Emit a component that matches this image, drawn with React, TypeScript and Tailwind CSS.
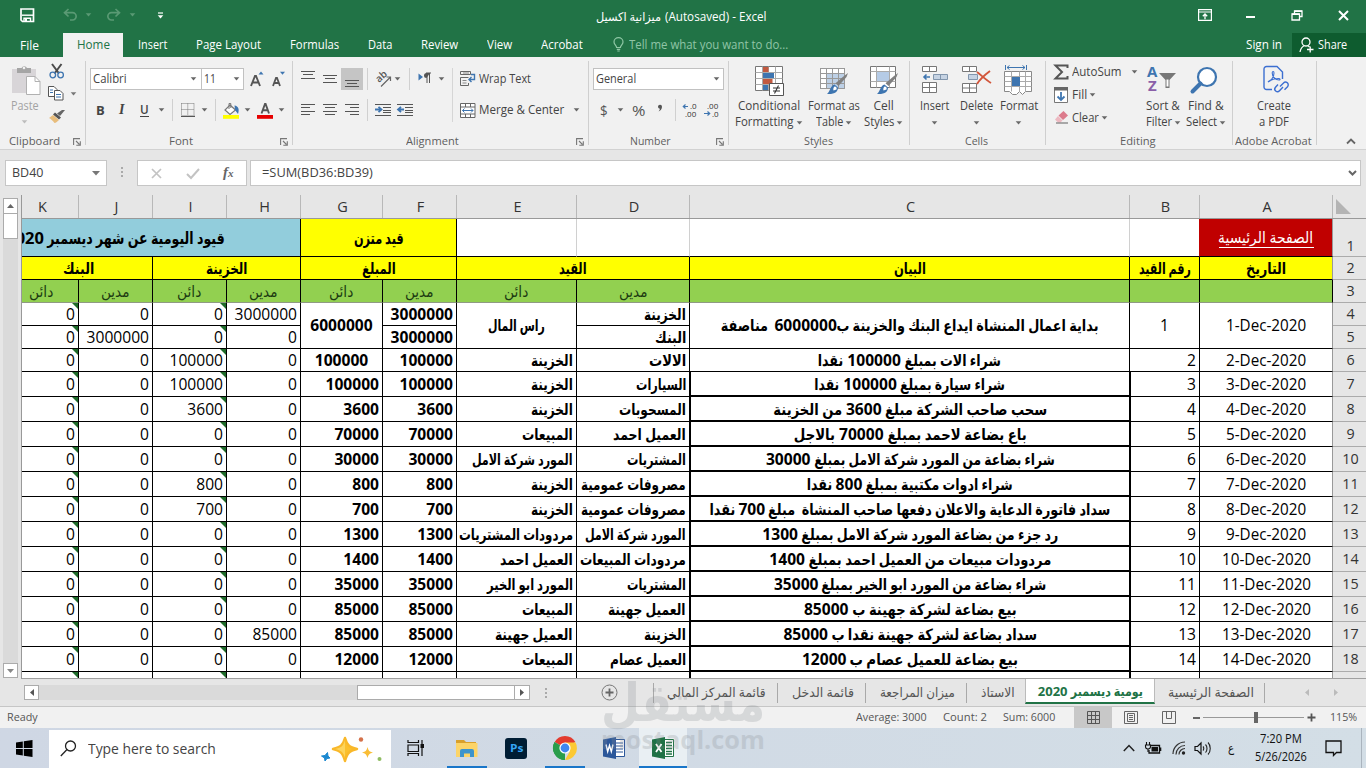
import React, { useLayoutEffect, useRef, useState } from "react";

const AR = /[\u0600-\u06ff]/;

/* Text run that is condensed or widened to the given advance width. */
function T({ w, className = "", children }: { w: number; className?: string; children: string }) {
  const ref = useRef<HTMLSpanElement>(null);
  const rtl = AR.test(children);
  const parts = rtl ? children.split(/(\d+)/).filter((p) => p !== "") : [children];
  const [m, setM] = useState<{ s: number; widths: number[] } | null>(null);
  useLayoutEffect(() => {
    const kids = Array.from(ref.current!.querySelectorAll<HTMLElement>("[data-run]"));
    const widths = kids.map((k) => k.offsetWidth);
    let fixed = 0;
    let flexible = 0;
    parts.forEach((p, i) => {
      if (rtl && /^\d+$/.test(p)) fixed += widths[i];
      else flexible += widths[i];
    });
    setM({ s: flexible ? (w - fixed) / flexible : 1, widths });
  }, [w, children]);
  return (
    <span ref={ref} dir={rtl ? "rtl" : "ltr"} className={"inline-flex shrink-0 whitespace-pre " + className}>
      {parts.map((p, i) => {
        const s = m && !(rtl && /^\d+$/.test(p)) ? m.s : 1;
        return (
          <span key={i} className="inline-block shrink-0" style={m ? { width: m.widths[i] * s } : undefined}>
            <span
              data-run=""
              className={rtl ? "inline-block origin-right" : "inline-block origin-left"}
              style={{ transform: s === 1 ? undefined : `scaleX(${s})` }}
            >
              {p}
            </span>
          </span>
        );
      })}
    </span>
  );
}

const Caret = ({ className = "" }: { className?: string }) => (
  <svg viewBox="0 0 7 4" className={"h-[4px] w-[7px] shrink-0 " + className}>
    <path d="M0.7 0.2h5.6L3.5 3.6z" fill="currentColor" />
  </svg>
);
const Sep = ({ className = "" }: { className?: string }) => <i className={"h-[22px] w-px shrink-0 bg-[#d0d0d0] " + className} />;

function Svg({ w, h, className = "", children }: { w: number; h: number; className?: string; children: React.ReactNode }) {
  return (
    <svg width={w} height={h} viewBox={`0 0 ${w} ${h}`} fill="none" className={"shrink-0 overflow-visible " + className}>
      {children}
    </svg>
  );
}

/* ------------------------------ title + tabs ------------------------------ */

function TitleBar() {
  return (
    <div className="flex h-[33px] items-center text-white">
      <Svg w={15} h={15} className="ml-[20px] -mt-[2px]">
        <path d="M1 1h12.5v12.5H2.5L1 12z" stroke="#fff" strokeWidth="1.7" />
        <path d="M2 7.2h11" stroke="#fff" strokeWidth="1.4" />
        <path d="M4 14v-3.8h6.5V14" stroke="#fff" strokeWidth="1.4" />
        <path d="M5 11h2v3H5z" fill="#fff" />
      </Svg>
      <Svg w={15} h={13} className="ml-[28px] -mt-[4px]">
        <path d="M5.5 1L1.5 4.7l4 3.8M2 4.7h7.5a3.6 3.6 0 010 7.3H7" stroke="#5a9a74" strokeWidth="1.7" />
      </Svg>
      <Caret className="-mt-[4px] ml-[7px] text-[#5a9a74]" />
      <Svg w={15} h={13} className="ml-[14px] -mt-[4px]">
        <path d="M9.5 1l4 3.7-4 3.8M13 4.7H5.5a3.6 3.6 0 000 7.3H8" stroke="#5a9a74" strokeWidth="1.7" />
      </Svg>
      <Caret className="-mt-[4px] ml-[8px] text-[#5a9a74]" />
      <Svg w={7} h={7} className="ml-[21px] -mt-[3px]">
        <path d="M1 1h5" stroke="#fff" strokeWidth="1.2" />
        <path d="M.7 3.3h5.6L3.5 6.6z" fill="#fff" />
      </Svg>
      <span className="ml-[432px] flex items-center text-[12px]">
        <T w={65}>ميزانية اكسيل</T>
        <T w={102} className="ml-[4px]">(Autosaved) - Excel</T>
      </span>
      <Svg w={14} h={12} className="-mt-[3px] ml-[431px]">
        <path d="M.6.6h12.8v10.8H.6zM.6 3h12.8" stroke="#fff" strokeWidth="1.2" />
        <path d="M7 10.2V5.5M4.8 7.3L7 5l2.2 2.3" stroke="#fff" strokeWidth="1.3" />
      </Svg>
      <i className="ml-[34px] mt-[1px] h-[2px] w-[9px] bg-white" />
      <Svg w={12} h={11} className="-mt-[2px] ml-[36px]">
        <path d="M1 4h7.5v6H1zM3.5 4V1H11v5.5H8.5" stroke="#fff" strokeWidth="1.3" />
        <path d="M1 4.3h7.5M3.5 1.3H11" stroke="#fff" strokeWidth="1.6" />
      </Svg>
      <Svg w={11} h={11} className="-mt-[2px] ml-[35px]">
        <path d="M1 1l9 9M10 1l-9 9" stroke="#fff" strokeWidth="2" />
      </Svg>
    </div>
  );
}

function TabStrip() {
  return (
    <div className="flex h-[24px] items-center text-[12px] text-white">
      <T w={19} className="ml-[20px] mt-px">File</T>
      <div className="ml-[24px] flex h-full w-[60px] items-center justify-center bg-[#f1f1f1] text-[#217346]">
        <T w={33}>Home</T>
      </div>
      <T w={29} className="ml-[15px]">Insert</T>
      <T w={65} className="ml-[29px]">Page Layout</T>
      <T w={49} className="ml-[29px]">Formulas</T>
      <T w={24} className="ml-[29px]">Data</T>
      <T w={37} className="ml-[29px]">Review</T>
      <T w={25} className="ml-[29px]">View</T>
      <T w={42} className="ml-[29px]">Acrobat</T>
      <Svg w={11} h={15} className="-mt-[2px] ml-[30px]">
        <path d="M3.6 10.5C3.6 8.5 1 7.5 1 4.9a4.5 4.3 0 019 0c0 2.6-2.6 3.6-2.6 5.6zM3.8 12.3h3.4M4.3 14h2.4" stroke="#8fc7a5" strokeWidth="1.2" />
      </Svg>
      <T w={159} className="ml-[5px] text-[#90c5a6]">Tell me what you want to do...</T>
      <T w={36} className="ml-[458px]">Sign in</T>
      <div className="ml-[10px] flex h-full flex-1 items-center bg-[#0e5c2f]">
        <Svg w={15} h={16} className="ml-[7px]">
          <circle cx="7" cy="5" r="4" stroke="#fff" strokeWidth="1.3" />
          <path d="M1 15c.5-3 2-5.3 4.500-6.500M8.500 8.500l2 1.500M8 12.500h6.500M11.200 9.500v6" stroke="#fff" strokeWidth="1.3" />
        </Svg>
        <T w={29} className="ml-[4px]">Share</T>
      </div>
    </div>
  );
}

/* --------------------------------- ribbon --------------------------------- */

function Group({ width, label, lw, launcher, children }: { width: string; label: string; lw: number; launcher?: boolean; children: React.ReactNode }) {
  return (
    <section className={"flex h-full shrink-0 " + width}>
      <div className="flex min-w-0 flex-1 flex-col">
        <div className="flex h-[76px] min-w-0">{children}</div>
        <div className="flex h-[16px] items-center justify-center text-[11.5px] text-[#5e5e5e]">
          <span className={launcher ? "flex flex-1 justify-center pr-[4px]" : "flex flex-1 justify-center pr-[2px]"}>
            <T w={lw}>{label}</T>
          </span>
          {launcher && (
            <Svg w={8} h={8} className="mr-[4px] mt-px">
              <path d="M.6 7V.6H7M3 3l3.500 3.500M7.300 3.300v4h-4" stroke="#777" strokeWidth="1.1" />
            </Svg>
          )}
        </div>
      </div>
      <i className="mt-[4px] h-[84px] w-px bg-[#cfcfcf]" />
    </section>
  );
}

function Big({ width, icon, a, aw, b, bw, caret = true }: { width: string; icon: React.ReactNode; a: string; aw: number; b?: string; bw?: number; caret?: boolean }) {
  return (
    <div className={"flex shrink-0 flex-col items-center pt-[7px] " + width}>
      <div className="flex h-[32px] items-center">{icon}</div>
      <span className="mt-[2px] flex h-[16px] items-center">
        <T w={aw}>{a}</T>
      </span>
      <span className="flex h-[16px] items-center">
        {b && <T w={bw!}>{b}</T>}
        {caret && <Caret className={b ? "ml-[2px] -mb-px text-[#6a6a6a]" : "-mb-px text-[#6a6a6a]"} />}
      </span>
    </div>
  );
}

function Lines({ ys, xs }: { ys: number[]; xs: [number, number][] }) {
  return (
    <Svg w={15} h={22}>
      {ys.map((y, i) => (
        <path key={y} d={`M${xs[i][0]} ${y + 0.5}h${xs[i][1]}`} stroke="#555" strokeWidth="1" />
      ))}
    </Svg>
  );
}

const Brush = () => (
  <>
    <path d="M29 8l-1.5 4-8 9-3-2.700L25 11z" fill="#808080" />
    <path d="M15.500 19.500l3.500 3c0 4-3 7-11 6.500 3-2 3.500-9 7.500-9.500z" fill="#3e75b0" />
    <path d="M15.500 21.500c2 0 2.500 1.500 2 3l-3 1c-.5-2 0-3 1-4z" fill="#fff" />
  </>
);

function Ribbon() {
  return (
    <div className="flex h-[93px] border-b border-[#d2d2d2] bg-[#f1f1f1] text-[12px] text-[#444]">
      <Group width="w-[86px]" label="Clipboard" lw={51} launcher>
        <div className="flex w-[49px] flex-col items-center pt-[8px]">
          <Svg w={30} h={31} className="ml-[3px]">
            <path d="M1 4h24v24H1z" fill="#d8d5d8" />
            <path d="M6 3h4.500a3 3 0 015.500 0H20v5H6z" fill="#a5a5a5" />
            <circle cx="13" cy="3" r="1.3" fill="#f1f1f1" />
            <path d="M15.500 11.500h8.500l5 5V29.500H15.500z" fill="#fff" stroke="#b1b1b1" />
            <path d="M24 11.500v5h5" stroke="#b1b1b1" />
          </Svg>
          <span className="mt-[2px] flex h-[16px] items-center text-[#a3a3a3]">
            <T w={28}>Paste</T>
          </span>
          <Caret className="mt-[6px] text-[#bdbdbd]" />
        </div>
        <div className="flex flex-col items-start pt-[6px]">
          <Svg w={16} h={16}>
            <path d="M3 1l7 9.500M12.500 1l-7 9.500" stroke="#4b4b4b" strokeWidth="2" />
            <circle cx="3.8" cy="12" r="2.8" stroke="#3e75b0" strokeWidth="1.300" />
            <circle cx="11.600" cy="12" r="2.8" stroke="#3e75b0" strokeWidth="1.300" />
          </Svg>
          <span className="mt-[7px] flex items-center">
            <Svg w={16} h={15} className="-ml-px">
              <path d="M.5.5h5.500l3 3v7h-8.500z" fill="#fff" stroke="#555" />
              <path d="M6.500 4.500H12l3 3v6.500H6.500z" fill="#fff" stroke="#555" />
              <path d="M2 4h3M2 6.500h3M8 8.500h5M8 11h5" stroke="#3e75b0" />
            </Svg>
            <Caret className="ml-[6px] text-[#777]" />
          </span>
          <Svg w={17} h={15} className="mt-[8px]">
            <path d="M16 1l-5 6-3-2.500L13 1z" fill="#666" />
            <path d="M6 3.500l6 5-2 2-6-5z" fill="#555" />
            <path d="M4 6l6 5c-1.500 1.500-3 3-4.500 3C3.500 11.500 2 10 0 9z" fill="#e8bd7c" />
          </Svg>
        </div>
      </Group>

      <Group width="w-[207px]" label="Font" lw={24} launcher>
        <div className="flex flex-col pl-[4px] pt-[11px]">
          <div className="flex h-[22px] items-center">
            <div className="flex h-[22px] w-[112px] items-center border border-[#c1c1c1] bg-white pl-[2px]">
              <T w={34}>Calibri</T>
              <Caret className="ml-[63px] text-[#666]" />
            </div>
            <div className="-ml-px flex h-[22px] w-[43px] items-center border border-[#c1c1c1] bg-white pl-[2px]">
              <T w={12}>11</T>
              <Caret className="ml-[17px] text-[#666]" />
            </div>
            <Svg w={14} h={16} className="ml-[6px]">
              <path d="M1 15L5 5h1l4 10M2.500 11.500h6" stroke="#555" strokeWidth="1.9" />
              <path d="M8.500 3.500L11 .5l2.500 3z" fill="#3e75b0" />
            </Svg>
            <Svg w={14} h={16} className="ml-[8px]">
              <path d="M1 15L4 7h1l3 8M2.500 12h4.500" stroke="#555" strokeWidth="1.8" />
              <path d="M8 .8h5l-2.500 3z" fill="#3e75b0" />
            </Svg>
          </div>
          <div className="mt-[9px] flex h-[22px] items-center text-[13px]">
            <T w={9} className="ml-[6px] font-bold">B</T>
            <span className="ml-[14px] w-[7px] font-['Liberation_Serif'] text-[14px] font-bold italic">I</span>
            <span className="ml-[14px] w-[9px] border-b border-[#444] pb-px font-semibold leading-[12px]">
              <T w={9}>U</T>
            </span>
            <Caret className="ml-[9px] text-[#666]" />
            <Sep className="ml-[7px]" />
            <Svg w={14} h={14} className="ml-[8px]">
              <path d="M.5.5v12M13 .5v12M6.750.5v12M.5.5H13M.5 6.500H13" stroke="#777" strokeDasharray="1 1" />
              <path d="M0 13.300h14" stroke="#444" strokeWidth="1.200" />
            </Svg>
            <Caret className="ml-[6px] text-[#666]" />
            <Sep className="ml-[7px]" />
            <Svg w={17} h={17} className="ml-[7px]">
              <path d="M7 3l5.500 5L7 12.500 2 8z" fill="#fff" stroke="#777" strokeWidth="1.200" />
              <path d="M6 7V1.500h1.800V6" stroke="#777" />
              <path d="M11.500 3.500c4 .5 5 4 3.500 8.500L12 8z" fill="#3e75b0" />
              <path d="M0 13h16v3.800H0z" fill="#ffff00" />
            </Svg>
            <Caret className="ml-[4px] text-[#666]" />
            <Svg w={16} h={17} className="ml-[6px]">
              <path d="M4.500 11.500L8 2h.6L12 11.500M6 8.300h4.800" stroke="#555" strokeWidth="1.900" />
              <path d="M0 13h16v3.800H0z" fill="#e60000" />
            </Svg>
            <Caret className="ml-[5px] text-[#666]" />
          </div>
        </div>
      </Group>

      <Group width="w-[296px]" label="Alignment" lw={53} launcher>
        <div className="flex w-[159px] shrink-0 flex-col pl-[8px] pt-[11px]">
          <div className="flex h-[22px] items-center">
            <Lines ys={[3, 6, 10]} xs={[[0, 14], [2, 10], [0, 14]]} />
            <span className="ml-[7px]">
              <Lines ys={[7, 10, 14]} xs={[[0, 14], [2, 10], [0, 14]]} />
            </span>
            <span className="ml-[3px] flex h-[22px] w-[22px] justify-center bg-[#c5c5c5]">
              <Lines ys={[12, 15, 18]} xs={[[0, 14], [2, 10], [0, 14]]} />
            </span>
            <Sep className="ml-[4px]" />
            <Svg w={17} h={17} className="ml-[7px]">
              <text x="0" y="0" transform="translate(4 12) rotate(-42)" fontSize="10" fontWeight="600" fill="#555" fontFamily="Open Sans">ab</text>
              <path d="M6 15.500L15.500 6M11.500 6h4v4" stroke="#666" strokeWidth="1.200" />
            </Svg>
            <Caret className="ml-[2px] text-[#666]" />
            <Sep className="ml-[8px]" />
            <Svg w={14} h={12} className="ml-[8px] -mt-[2px]">
              <path d="M.5 1.500L5 5 .5 8.500z" fill="#3e75b0" />
              <path d="M12 1H8.500a2.500 2.500 0 000 5z" fill="#555" />
              <path d="M9 1v10M11.500 1v10M8 1h5" stroke="#555" />
            </Svg>
            <Caret className="ml-[6px] text-[#666]" />
          </div>
          <div className="mt-[9px] flex h-[22px] items-center">
            <Lines ys={[5, 8, 12, 15]} xs={[[0, 14], [0, 9], [0, 14], [0, 9]]} />
            <span className="ml-[7px]">
              <Lines ys={[5, 8, 12, 15]} xs={[[0, 14], [2, 10], [0, 14], [2, 10]]} />
            </span>
            <span className="ml-[7px]">
              <Lines ys={[5, 8, 12, 15]} xs={[[0, 14], [5, 9], [0, 14], [5, 9]]} />
            </span>
            <Sep className="ml-[7px]" />
            <Svg w={16} h={14} className="ml-[7px]">
              <path d="M0 1.500h16M8 4.500h8M8 7.500h8M8 9.500h8M0 12.500h16" stroke="#555" />
              <path d="M0 6.500h5M3.500 3.800l3 2.700-3 2.700" stroke="#3e75b0" strokeWidth="1.800" />
            </Svg>
            <Svg w={16} h={14} className="ml-[6px]">
              <path d="M0 1.500h16M8 4.500h8M8 7.500h8M8 9.500h8M0 12.500h16" stroke="#555" />
              <path d="M2 6.500h5M4 3.800L1 6.500l3 2.700" stroke="#3e75b0" strokeWidth="1.800" />
            </Svg>
          </div>
        </div>
        <i className="mt-[11px] h-[54px] w-px bg-[#d6d6d6]" />
        <div className="flex flex-col pl-[7px] pt-[11px]">
          <div className="flex h-[22px] items-center">
            <Svg w={16} h={16}>
              <path d="M.5.5h10v3H.5zM.5 6.500h8M.5 14.500v-8M8.500 12v2.500H.5" stroke="#666" />
              <path d="M2.500 9.500h4M2.500 12h4M3 2h6" stroke="#888" />
              <path d="M11 3.500h3.500v5H9M11.500 6L9 8.500l2.500 2.500" stroke="#3e75b0" strokeWidth="1.400" />
            </Svg>
            <T w={52} className="ml-[3px]">Wrap Text</T>
          </div>
          <div className="mt-[9px] flex h-[22px] items-center">
            <Svg w={16} h={15}>
              <path d="M.5.5h14.500v14H.5zM.5 4h14.500M.5 11h14.500M5.500.5V4M10.500.5V4M5.500 11v3.500M10.500 11v3.500" stroke="#666" fill="#fff" />
              <path d="M2.500 7.500h10.500M4.500 5.500l-2 2 2 2M11 5.500l2 2-2 2" stroke="#3e75b0" />
            </Svg>
            <T w={85} className="ml-[3px]">Merge &amp; Center</T>
            <Caret className="ml-[9px] text-[#666]" />
          </div>
        </div>
      </Group>

      <Group width="w-[140px]" label="Number" lw={41} launcher>
        <div className="flex flex-col pl-[4px] pt-[11px]">
          <div className="flex h-[22px] w-[131px] items-center border border-[#c1c1c1] bg-white pl-[2px]">
            <T w={40}>General</T>
            <Caret className="ml-[77px] text-[#666]" />
          </div>
          <div className="mt-[9px] flex h-[22px] items-center text-[15px] text-[#555]">
            <T w={8} className="ml-[7px]">$</T>
            <Caret className="ml-[9px] text-[#666]" />
            <T w={13} className="ml-[8px]">%</T>
            <Svg w={6} h={9} className="-mt-[3px] ml-[12px]">
              <path d="M3.200.8a2 2 0 011.800 2C5 5 3.500 6.800 1.500 7.500c1-1 1.300-1.800 1.300-2.700A2 2 0 013.200.8z" fill="#555" />
            </Svg>
            <Sep className="ml-[12px]" />
            <Svg w={16} h={16} className="ml-[6px]">
              <text x="8" y="7" fontSize="8" fill="#333" fontFamily="Open Sans">.0</text>
              <text x="3" y="14.500" fontSize="8" fill="#333" fontFamily="Open Sans">.00</text>
              <path d="M6 4.500H1.500M3.500 2.500L1.300 4.500l2.200 2" stroke="#3e75b0" strokeWidth="1.200" />
            </Svg>
            <Svg w={16} h={16} className="ml-[6px]">
              <text x="3" y="7" fontSize="8" fill="#333" fontFamily="Open Sans">.00</text>
              <text x="8" y="14.500" fontSize="8" fill="#333" fontFamily="Open Sans">.0</text>
              <path d="M0 11.500h5M3.500 9.500l2.200 2-2.200 2" stroke="#3e75b0" strokeWidth="1.200" />
            </Svg>
          </div>
        </div>
      </Group>

      <Group width="w-[181px]" label="Styles" lw={29}>
        <Big
          width="w-[80px]"
          a="Conditional"
          aw={62}
          b="Formatting"
          bw={59}
          icon={
            <Svg w={31} h={31}>
              <path d="M1.500 1.500h27v24h-27z" fill="#fff" stroke="#777" />
              <path d="M9 2h5v5H9zM9 14h9v5H9z" fill="#c2593f" />
              <path d="M9 8h11v5H9zM9 20h5v5H9z" fill="#3e75b0" />
              <path d="M1.500 7.500h27M1.500 13.500h27M1.500 19.500h27M8.500 1.500v24M14.500 1.500v24M21.500 1.500v24" stroke="#aaa" />
              <path d="M9 2h5.500v5H9zM9 14h9.500v5H9z" fill="#c2593f" />
              <path d="M9 8h11v5H9zM9 20h5v5H9z" fill="#3e75b0" />
              <path d="M15.500 18.500h14v12h-14z" fill="#fff" stroke="#555" />
              <path d="M19 23h7M19 26h7M24.500 20.500l-4 8" stroke="#333" strokeWidth="1.100" />
            </Svg>
          }
        />
        <Big
          width="w-[49px]"
          a="Format as"
          aw={52}
          b="Table"
          bw={27}
          icon={
            <Svg w={30} h={31}>
              <path d="M1.500 3.500h24v20h-24z" fill="#fff" stroke="#777" />
              <path d="M7.500 8.500h18v15h-18z" fill="#bdd0e6" />
              <path d="M1.500 8.500h24M1.500 13.500h24M1.500 18.500h24M7.500 3.500v20M13.500 3.500v20M19.500 3.500v20M1.500 3.500h24v20h-24z" stroke="#999" />
              <Brush />
            </Svg>
          }
        />
        <Big
          width="w-[51px]"
          a="Cell"
          aw={20}
          b="Styles"
          bw={30}
          icon={
            <Svg w={30} h={31}>
              <path d="M1.500 1.500h25v21h-25z" fill="#fff" stroke="#777" />
              <path d="M7.500 6.500h13v10h-13z" fill="#b5cbe6" />
              <path d="M1.500 6.500h25M1.500 16.500h25M7.500 1.500v21M20.500 1.500v21" stroke="#aaa" />
              <Brush />
            </Svg>
          }
        />
      </Group>

      <Group width="w-[136px]" label="Cells" lw={23}>
        <Big
          width="w-[48px]"
          a="Insert"
          aw={29}
          icon={
            <Svg w={27} h={30} className="-mt-[1px]">
              <path d="M1.500 1.500h14v5h-14zM8.500 1.500v5M1.500 17.500h14v10h-14zM1.500 22.500h14M8.500 17.500v10" fill="#fff" stroke="#777" />
              <path d="M12.500 9.500h14v5h-14zM19.500 9.500v5" fill="#c6d3e3" stroke="#8296ad" />
              <path d="M9 12H3M5.500 9.500L3 12l2.500 2.500" stroke="#3e75b0" strokeWidth="1.600" />
            </Svg>
          }
        />
        <Big
          width="w-[36px]"
          a="Delete"
          aw={33}
          icon={
            <Svg w={31} h={30} className="-mt-[1px]">
              <path d="M1.500 1.500h14v5h-14zM8.500 1.500v5M1.500 18.500h14v9h-14zM1.500 23h14M8.500 18.500v9" fill="#fff" stroke="#777" />
              <path d="M7.500 9.500h9v5h-9z" fill="#c6d3e3" stroke="#8296ad" />
              <path d="M16 7c4 3 9 8 14 11M29 6c-4 3-10 8-13 13" stroke="#d2553a" strokeWidth="1.900" />
            </Svg>
          }
        />
        <Big
          width="w-[49px]"
          a="Format"
          aw={38}
          icon={
            <Svg w={29} h={32}>
              <path d="M1.500 1v5M22.500 1v5M3 3.500h18M5.500 1.500l-2.500 2 2.500 2M18.500 1.500l2.500 2-2.500 2" stroke="#3e75b0" />
              <path d="M.5 7.500h27v20h-6l-3 3-3-3-3 3-4 0-3-3H.5z" fill="#fff" stroke="#888" />
              <path d="M.5 12.500h27M.5 22.500h27M7.500 7.500v20M15.500 7.500v20M21.500 7.500v20M.5 17.500h27" stroke="#aaa" />
              <path d="M8 13h8v9H8z" fill="#3e75b0" />
            </Svg>
          }
        />
      </Group>

      <Group width="w-[187px]" label="Editing" lw={36}>
        <div className="flex w-[95px] shrink-0 flex-col pl-[8px] pt-[5px]">
          <div className="flex h-[20px] items-center">
            <Svg w={15} h={16}>
              <path d="M13.500 4V1.500H1.500L8 8l-6.500 6.500h12V12" stroke="#555" strokeWidth="2" />
            </Svg>
            <T w={50} className="ml-[3px]">AutoSum</T>
            <Caret className="ml-[9px] text-[#666]" />
          </div>
          <div className="mt-[3px] flex h-[20px] items-center">
            <Svg w={15} h={16} className="-mt-px">
              <path d="M.5.5h13v15H.5z" fill="#fff" stroke="#777" />
              <path d="M0 0h14v3.500H0z" fill="#666" />
              <path d="M7 5v8M3.500 9.500L7 13l3.500-3.500" stroke="#3e75b0" strokeWidth="1.800" />
            </Svg>
            <T w={15} className="ml-[3px]">Fill</T>
            <Caret className="ml-[2px] text-[#666]" />
          </div>
          <div className="mt-[3px] flex h-[20px] items-center">
            <Svg w={15} h={13} className="-mt-[2px]">
              <path d="M9.500 0l4.500 4.500L9 9 4.500 4.500z" fill="#dc7b8c" />
              <path d="M4 5l4.500 4.500-2 2H4L1 8.500z" fill="#edb9c1" />
              <path d="M2 12h12" stroke="#777" strokeWidth="1.200" />
            </Svg>
            <T w={27} className="ml-[3px]">Clear</T>
            <Caret className="ml-[2px] text-[#666]" />
          </div>
        </div>
        <Big
          width="w-[44px]"
          a="Sort &"
          aw={34}
          b="Filter"
          bw={26}
          icon={
            <Svg w={30} h={30} className="-ml-[2px]">
              <text x="0" y="12" fontSize="15" fontWeight="700" fill="#3e75b0" fontFamily="Open Sans">A</text>
              <text x="1" y="26" fontSize="15" fontWeight="700" fill="#8a5fa8" fontFamily="Open Sans">Z</text>
              <path d="M12 8h17l-6.500 7v8h-4v-8z" fill="#777" />
              <path d="M19.500 14.500h2v7h-2z" fill="#fff" />
            </Svg>
          }
        />
        <Big
          width="w-[42px]"
          a="Find &"
          aw={36}
          b="Select"
          bw={31}
          icon={
            <Svg w={28} h={29} className="-ml-[4px]">
              <circle cx="17" cy="11" r="9" fill="#fff" stroke="#3e75b0" strokeWidth="2.200" />
              <path d="M10.500 17.500L2.500 25.500" stroke="#3e75b0" strokeWidth="4" strokeLinecap="round" />
            </Svg>
          }
        />
      </Group>

      <Group width="w-[84px]" label="Adobe Acrobat" lw={77}>
        <Big
          width="w-[82px]"
          a="Create"
          aw={34}
          b="a PDF"
          bw={30}
          caret={false}
          icon={
            <Svg w={26} h={30} className="ml-[4px]">
              <path d="M9 24.500H3.500a2.500 2.500 0 01-2.500-2.500V4a2.500 2.500 0 012.500-2.500H14l5.500 5.500V14" stroke="#3c6fd1" strokeWidth="1.400" />
              <path d="M5 17c3-1 6-5 6-9 0-2-1.800-2-1.800 0 0 4 3.500 7 6.800 7 1.500 0 1.500-1.500-.5-1.500-3.500 0-7 1-10 3z" stroke="#3c6fd1" strokeWidth="1.100" />
              <path d="M17 21.500l3.500-3.500a2.600 2.600 0 014 3.700l-3 3M20 22l-3.500 3.800a2.600 2.600 0 01-4-3.600l2.500-2.700" stroke="#3c6fd1" strokeWidth="1.400" />
            </Svg>
          }
        />
      </Group>

      <Svg w={10} h={7} className="ml-[29px] mt-[81px]">
        <path d="M1 5.500l4-4 4 4" stroke="#666" strokeWidth="1.800" />
      </Svg>
    </div>
  );
}

/* ------------------------------- formula bar ------------------------------ */

function FormulaBar() {
  return (
    <div className="flex h-[45px] items-start bg-[#e6e6e6] pl-[5px] pt-[10px] text-[12.5px] text-[#444]">
      <div className="flex h-[26px] w-[102px] items-center border border-[#c6c6c6] bg-white pl-[6px]">
        <T w={31}>BD40</T>
        <svg viewBox="0 0 8 5" className="ml-[49px] h-[5px] w-[8px]">
          <path d="M0 0h8L4 4.500z" fill="#777" />
        </svg>
      </div>
      <Svg w={3} h={12} className="ml-[14px] mt-[7px]">
        <path d="M0 1h2M0 5h2M0 9h2" stroke="#aaa" strokeWidth="2" />
      </Svg>
      <div className="ml-[13px] flex h-[26px] w-[110px] items-center border border-[#c6c6c6] bg-white">
        <Svg w={11} h={11} className="ml-[13px]">
          <path d="M1 1l9 9M10 1l-9 9" stroke="#c3c3c3" strokeWidth="1.700" />
        </Svg>
        <Svg w={14} h={11} className="ml-[24px]">
          <path d="M1 6l4 4 8-9" stroke="#c3c3c3" strokeWidth="2" />
        </Svg>
        <span className="ml-[23px] -mt-[2px] font-['Liberation_Serif'] text-[15px] font-bold italic text-[#666]">
          f<span className="text-[11px]">x</span>
        </span>
      </div>
      <div className="ml-[3px] flex h-[26px] w-[1111px] items-center border border-[#c6c6c6] bg-white pl-[11px]">
        <T w={111}>=SUM(BD36:BD39)</T>
        <Svg w={9} h={6} className="ml-[975px] -mt-[1px]">
          <path d="M1 1l3.500 3.500L8 1" stroke="#666" strokeWidth="2" />
        </Svg>
      </div>
    </div>
  );
}

/* ---------------------------------- grid ---------------------------------- */

const COLS = "grid grid-cols-[74px_74px_74px_74px_82px_74px_120px_113px_440px_70px_133px_33px]";

const DATES = ["2-Dec-2020", "3-Dec-2020", "4-Dec-2020", "5-Dec-2020", "6-Dec-2020", "7-Dec-2020", "8-Dec-2020", "9-Dec-2020", "10-Dec-2020", "11-Dec-2020", "12-Dec-2020", "13-Dec-2020", "14-Dec-2020"];

type Line = { c: string; cw: number; d: string; dw: number; e: string; ew: number; n: string; i?: string; h?: string };
const LINES: Line[] = [
  { c: "شراء الات بمبلغ 100000 نقدا", cw: 182, d: "الالات", dw: 37, e: "الخزينة", ew: 42, n: "100000", i: "100000" },
  { c: "شراء سيارة بمبلغ 100000 نقدا", cw: 190, d: "السيارات", dw: 50, e: "الخزينة", ew: 42, n: "100000", i: "100000" },
  { c: "سحب صاحب الشركة مبلغ 3600 من الخزينة", cw: 274, d: "المسحوبات", dw: 67, e: "الخزينة", ew: 42, n: "3600", i: "3600" },
  { c: "باع بضاعة لاحمد بمبلغ 70000 بالاجل", cw: 233, d: "العميل احمد", dw: 73, e: "المبيعات", ew: 51, n: "70000" },
  { c: "شراء بضاعة من المورد شركة الامل بمبلغ 30000", cw: 289, d: "المشتريات", dw: 59, e: "المورد شركة الامل", ew: 101, n: "30000" },
  { c: "شراء ادوات مكتبية بمبلغ 800 نقدا", cw: 206, d: "مصروفات عمومية", dw: 105, e: "الخزينة", ew: 42, n: "800", i: "800" },
  { c: "سداد فاتورة الدعاية والاعلان دفعها صاحب المنشاة  مبلغ 700 نقدا", cw: 401, d: "مصروفات عمومية", dw: 105, e: "الخزينة", ew: 42, n: "700", i: "700" },
  { c: "رد جزء من بضاعة المورد شركة الامل بمبلغ 1300", cw: 296, d: "المورد شركة الامل", dw: 101, e: "مردودات المشتريات", ew: 114, n: "1300" },
  { c: "مردودات مبيعات من العميل احمد بمبلغ 1400", cw: 282, d: "مردودات المبيعات", dw: 106, e: "العميل احمد", ew: 73, n: "1400" },
  { c: "شراء بضاعة من المورد ابو الخير بمبلغ 35000", cw: 273, d: "المشتريات", dw: 59, e: "المورد ابو الخير", ew: 86, n: "35000" },
  { c: "بيع بضاعة لشركة جهينة ب 85000", cw: 213, d: "العميل جهينة", dw: 78, e: "المبيعات", ew: 51, n: "85000" },
  { c: "سداد بضاعة لشركة جهينة نقدا ب 85000", cw: 254, d: "الخزينة", dw: 42, e: "العميل جهينة", ew: 78, n: "85000", h: "85000" },
  { c: "بيع بضاعة للعميل عصام ب 12000", cw: 217, d: "العميل عصام", dw: 76, e: "المبيعات", ew: 51, n: "12000" },
];

const CELL = "relative flex min-w-0 items-center border-b border-r border-black ";
const NUM = CELL + "justify-end pr-[3px] ";
const BNUM = NUM + "font-bold ";
const YEL = CELL + "justify-center bg-[#ffff00] font-bold text-[15.5px] ";
const GRN = "relative flex items-center justify-center border-b border-r border-b-[#8f9a84] border-r-black bg-[#92d050] text-[15.5px] text-[#1d3b12] ";
const HEAD = "flex items-center justify-center border-b border-[#ababab] bg-[#e6e6e6] pl-[2px] text-[14.3px] text-[#333] ";

const Flag = () => (
  <svg viewBox="0 0 6 6" className="absolute right-0 top-0 h-[6px] w-[6px]">
    <path d="M0 0h6v6z" fill="#1e6b2a" />
  </svg>
);

function Sheet() {
  return (
    <div className="flex h-[484px] bg-[#e6e6e6]">
      {/* vertical scroll bar */}
      <div className="flex w-[21px] shrink-0 flex-col pl-[3px] pt-[3px]">
        <div className="flex h-[16px] w-[15px] items-center justify-center border border-[#ababab] bg-white">
          <svg viewBox="0 0 7 4" className="h-[4px] w-[7px]"><path d="M0 4h7L3.500 0z" fill="#666" /></svg>
        </div>
        <div className="-mt-px h-[26px] w-[15px] border border-[#ababab] bg-white" />
        <div className="w-[15px] flex-1 bg-[#dadada]" />
        <div className="mb-px flex h-[15px] w-[15px] items-center justify-center border border-[#ababab] bg-white">
          <svg viewBox="0 0 7 4" className="h-[4px] w-[7px]"><path d="M0 0h7L3.500 4z" fill="#888" /></svg>
        </div>
      </div>
      <div className="h-[484px] w-[1345px] overflow-hidden border-l border-[#999] text-[15.6px] text-black">
        <div className={COLS + " ml-[-17px] h-[24px] border-b border-[#999] bg-[#e6e6e6] text-[14.5px] text-[#333]"}>
          {["K", "J", "I", "H", "G", "F", "E", "D", "C", "B", "A"].map((c) => (
            <div key={c} className="flex items-center justify-center border-r border-[#b8b8b8] pl-[2px]">{c}</div>
          ))}
          <div className="flex items-center justify-start pl-[3px]">
            <Svg w={15} h={15}><path d="M0 0v15h15z" fill="#b4b4b4" /></Svg>
          </div>
        </div>
        <div className={COLS + " ml-[-17px] h-[459px] grid-rows-[38px_23px_23px_23px_23px_23px_repeat(13,25px)] overflow-hidden bg-white"}>
          {/* row 1 */}
          <div className={CELL + "col-span-4 justify-end bg-[#92cddc] pr-[75px] text-[16.5px] font-bold"}>
            <T w={219}>قيود اليومية عن شهر ديسمبر 2020</T>
          </div>
          <div className={YEL + "col-span-2"}><T w={50} className="text-[16.5px]">قيد متزن</T></div>
          <div className="border-b border-r border-b-black border-r-[#d0d0d0]" />
          <div className="border-b border-r border-b-black border-r-[#d0d0d0]" />
          <div className="border-b border-r border-b-black border-r-[#d0d0d0]" />
          <div className="border-b border-r border-b-black border-r-[#c00000]" />
          <div className="flex items-center justify-center border-b border-r border-b-black border-r-[#999] bg-[#c00000] text-[15.5px] text-white">
            <span className="flex border-b border-white leading-[19px]"><T w={95}>الصفحة الرئيسية</T></span>
          </div>
          <div className={HEAD + "items-end pb-[2px]"}>1</div>
          {/* row 2 */}
          <div className={YEL + "col-span-2"}><T w={31}>البنك</T></div>
          <div className={YEL + "col-span-2"}><T w={42}>الخزينة</T></div>
          <div className={YEL + "col-span-2"}><T w={34}>المبلغ</T></div>
          <div className={YEL + "col-span-2"}><T w={28}>القيد</T></div>
          <div className={YEL}><T w={32}>البيان</T></div>
          <div className={YEL}><T w={52}>رقم القيد</T></div>
          <div className={YEL + "border-r-[#999]"}><T w={40}>التاريخ</T></div>
          <div className={HEAD}>2</div>
          {/* row 3 */}
          {["دائن", "مدين", "دائن", "مدين", "دائن", "مدين", "دائن", "مدين"].map((t, i) => (
            <div key={i} className={GRN}><T w={t === "دائن" ? 24 : 29}>{t}</T></div>
          ))}
          <div className={GRN} /><div className={GRN} /><div className={GRN} />
          <div className={HEAD}>3</div>
          {/* rows 4 and 5 */}
          <div className={NUM}>0<Flag /></div>
          <div className={NUM}>0</div>
          <div className={NUM}>0<Flag /></div>
          <div className={NUM}>3000000</div>
          <div className={CELL + "row-span-2 justify-center pb-px font-bold"}>6000000</div>
          <div className={BNUM}>3000000</div>
          <div className={CELL + "row-span-2 justify-center pb-px font-bold"}><T w={57}>راس المال</T></div>
          <div className={BNUM}><T w={42}>الخزينة</T></div>
          <div className={CELL + "row-span-2 justify-center pb-px font-bold"}><T w={378}>بداية اعمال المنشاة ايداع البنك والخزينة ب6000000  مناصفة</T></div>
          <div className={CELL + "row-span-2 justify-center pb-px"}>1</div>
          <div className={CELL + "row-span-2 justify-center border-r-[#999] pb-px"}><T w={80}>1-Dec-2020</T></div>
          <div className={HEAD}>4</div>
          <div className={NUM}>0<Flag /></div>
          <div className={NUM}>3000000</div>
          <div className={NUM}>0<Flag /></div>
          <div className={NUM}>0</div>
          <div className={BNUM}>3000000</div>
          <div className={BNUM}><T w={31}>البنك</T></div>
          <div className={HEAD}>5</div>
          {/* rows 6 to 18 */}
          {LINES.map((l, k) => (
            <React.Fragment key={k}>
              <div className={NUM}>0<Flag /></div>
              <div className={NUM}>0</div>
              <div className={NUM}>{l.i ?? "0"}<Flag /></div>
              <div className={NUM}>{l.h ?? "0"}</div>
              <div className={k === 0 ? CELL + "justify-center font-bold" : BNUM}>{l.n}</div>
              <div className={BNUM}>{l.n}</div>
              <div className={BNUM}><T w={l.ew}>{l.e}</T></div>
              <div className={BNUM}><T w={l.dw}>{l.d}</T></div>
              <div className={CELL + "justify-center font-bold " + (k > 0 ? "border-b-2 border-l border-r" : "")}><T w={l.cw}>{l.c}</T></div>
              <div className={CELL + "justify-end pr-[3px] " + (k > 0 ? "border-l" : "")}>{String(k + 2)}</div>
              <div className={CELL + "justify-center border-r-[#999]"}><T w={k > 7 ? 89 : 80}>{DATES[k]}</T></div>
              <div className={HEAD}>{String(k + 6)}</div>
            </React.Fragment>
          ))}
          {/* row 19, cut by the window edge */}
          <div className={NUM}><Flag /></div>
          <div className={NUM} />
          <div className={NUM}><Flag /></div>
          <div className={NUM} /><div className={NUM} /><div className={NUM} /><div className={NUM} /><div className={NUM} />
          <div className={CELL + "border-l"} />
          <div className={CELL + "border-l"} />
          <div className={CELL + "border-r-[#999]"} />
          <div className={HEAD} />
        </div>
        <div className="h-px bg-[#a0a0a0]" />
      </div>
    </div>
  );
}

/* ------------------------------- sheet tabs ------------------------------- */

function SheetTabs() {
  const bar = "h-[20px] w-px shrink-0 bg-[#a9a9a9] ";
  return (
    <div className="flex h-[28px] items-center border-b border-[#c6c6c6] bg-[#e6e6e6] text-[13px] text-[#555]">
      <div className="ml-[24px] flex h-[15px] w-[15px] items-center justify-center border border-[#ababab] bg-white">
        <svg viewBox="0 0 4 7" className="h-[7px] w-[4px]"><path d="M4 0v7L0 3.500z" fill="#555" /></svg>
      </div>
      <div className="h-[15px] w-[318px] bg-[#dadada]" />
      <div className="h-[15px] w-[158px] border border-[#ababab] bg-white" />
      <div className="-ml-px flex h-[15px] w-[16px] items-center justify-center border border-[#ababab] bg-white">
        <svg viewBox="0 0 4 7" className="h-[7px] w-[4px]"><path d="M0 0v7l4-3.500z" fill="#555" /></svg>
      </div>
      <Svg w={2} h={10} className="ml-[15px]"><path d="M0 1h2M0 5h2M0 9h2" stroke="#aaa" strokeWidth="2" /></Svg>
      <Svg w={17} h={17} className="ml-[54px]">
        <circle cx="8.500" cy="8.500" r="7.500" stroke="#777" /><path d="M4.500 8.500h8M8.500 4.500v8" stroke="#666" strokeWidth="1.800" />
      </Svg>
      <i className={bar + "ml-[35px]"} />
      <T w={99} className="ml-[13px] -mt-px">قائمة المركز المالي</T>
      <i className={bar + "ml-[11px]"} />
      <T w={62} className="ml-[14px] -mt-px">قائمة الدخل</T>
      <i className={bar + "ml-[11px]"} />
      <T w={75} className="ml-[14px] -mt-px">ميزان المراجعة</T>
      <i className={bar + "ml-[11px]"} />
      <T w={34} className="ml-[14px] -mt-px">الاستاذ</T>
      <div className="ml-[10px] flex h-[25px] w-[130px] items-center justify-center self-start border-x border-b-2 border-x-[#bbb] border-b-[#217346] bg-white pt-px font-bold text-[#217346]">
        <T w={105}>يومية ديسمبر 2020</T>
      </div>
      <T w={86} className="ml-[13px] -mt-px">الصفحة الرئيسية</T>
      <i className={bar + "ml-[10px]"} />
      <svg viewBox="0 0 4 7" className="ml-[40px] h-[7px] w-[4px]"><path d="M4 0v7L0 3.500z" fill="#bbb" /></svg>
      <svg viewBox="0 0 4 7" className="ml-[25px] h-[7px] w-[4px]"><path d="M0 0v7l4-3.500z" fill="#bbb" /></svg>
    </div>
  );
}

function StatusBar() {
  return (
    <div className="flex h-[21px] items-center bg-[#f1f1f1] text-[11.5px] text-[#555]">
      <T w={31} className="ml-[7px] -mt-px">Ready</T>
      <T w={71} className="ml-[818px] -mt-px">Average: 3000</T>
      <T w={44} className="ml-[16px] -mt-px">Count: 2</T>
      <T w={52} className="ml-[16px] -mt-px">Sum: 6000</T>
      <div className="ml-[19px] flex h-full w-[38px] items-center justify-center bg-[#c8c8c8]">
        <Svg w={13} h={13} className="-mt-px"><path d="M.5.5h12v12H.5zM.5 4.500h12M.5 8.500h12M4.500.5v12M8.500.5v12" stroke="#555" /></Svg>
      </div>
      <Svg w={14} h={13} className="-mt-px ml-[12px]">
        <path d="M.5.5h13v12H.5zM3.500 2.500h7v8h-7zM5 4.500h4M5 6.500h4M5 8.500h4" stroke="#666" />
      </Svg>
      <Svg w={14} h={13} className="-mt-px ml-[24px]">
        <path d="M.5.5h13v12H.5zM4.500.5v7h5v-7" stroke="#666" />
      </Svg>
      <i className="ml-[17px] h-[2px] w-[7px] bg-[#666]" />
      <div className="ml-[3px] flex h-px w-[101px] items-center bg-[#999]">
        <i className="ml-[51px] h-[11px] w-[4px] bg-[#666]" />
      </div>
      <Svg w={9} h={9} className="-mt-px ml-[3px]"><path d="M.5 4.500h8M4.500.5v8" stroke="#555" strokeWidth="1.800" /></Svg>
      <T w={27} className="ml-[14px] -mt-px">115%</T>
    </div>
  );
}

/* --------------------------------- taskbar -------------------------------- */

function TaskBar() {
  return (
    <div className="flex h-[40px] items-center bg-gradient-to-r from-[#cfd7e4] to-[#d3dee6] text-[12px] text-[#111]">
      <Svg w={17} h={17} className="ml-[16px]">
        <path d="M0 2.500L6.800 1.500v6.500H0zM7.800 1.300L16.500 0v8H7.800zM0 9h6.800v6.500L0 14.500zM7.800 9h8.700v8l-8.700-1.300z" fill="#000" />
      </Svg>
      <div className="ml-[16px] mt-px flex h-[38px] w-[342px] items-center bg-white">
        <Svg w={17} h={17} className="ml-[11px]">
          <circle cx="10.500" cy="6" r="5" stroke="#222" strokeWidth="1.300" />
          <path d="M7 9.500L.8 16" stroke="#222" strokeWidth="1.300" />
        </Svg>
        <T w={128} className="ml-[11px] text-[14px] text-[#444]">Type here to search</T>
        <Svg w={62} h={26} className="ml-[104px]">
          <path d="M25 2c2 7 4 9 12 11-8 2-10 4-12 12-2-8-4-10-12-12C21 11 23 9 25 2z" fill="#fbc02d" stroke="#f9b82a" strokeWidth="2.500" strokeLinejoin="round" />
          <path d="M25 4c-1.500 6-4 8-10 9 6 1.500 8.500 3 10 9z" fill="#fdd45c" />
          <path d="M47.500 11c1 4 2 4.600 5.500 5.500-3.500 1-4.500 2-5.500 5.500-1-3.500-2-4.500-5.500-5.500 3.500-.9 4.500-1.500 5.500-5.500z" fill="#f9bd35" />
          <path d="M7.500 16.500l.5 3.500 2 2-3 .5-2 2.500-.5-3-3-2 3.500-.5z" fill="#1a88d0" stroke="#1a88d0" strokeLinejoin="round" />
          <circle cx="41" cy="3.500" r="2.200" fill="#d4714a" />
          <circle cx="59.500" cy="23" r="2" fill="#8fbc62" />
        </Svg>
      </div>
      <Svg w={17} h={16} className="ml-[16px]">
        <path d="M1 0v2.500h10.500V0M1 5h10.500v6.500H1zM1 16v-2.500h10.500V16M15 0v16" stroke="#111" strokeWidth="1.200" />
        <path d="M13.500 4h3.500v4h-3.500z" fill="#111" />
      </Svg>
      <div className="ml-[23px] flex h-full w-[40px] items-center justify-center border-b-2 border-[#1976c9]">
        <Svg w={22} h={19} className="mt-[2px]">
          <path d="M0 1h8l2 2h10v4H0z" fill="#d9a02b" />
          <path d="M0 4h21.500v14H0z" fill="#fcd468" />
          <path d="M4 18v-6a2 2 0 012-2h10a2 2 0 012 2v6h-4v-3.500H8V18z" fill="#3d94cc" />
        </Svg>
      </div>
      <div className="ml-[18px] flex h-[21px] w-[22px] items-center justify-center rounded-[3px] bg-[#001d34] text-[11px] font-bold text-[#35a6f7]">
        <T w={13}>Ps</T>
      </div>
      <div className="ml-[18px] flex h-full w-[40px] items-center justify-center border-b-2 border-[#1976c9]">
        <Svg w={24} h={24} className="mt-[2px]">
          <path d="M12 12L1.600 6A12 12 0 0122.400 6z" fill="#e33b2e" />
          <path d="M12 12l0 12A12 12 0 011.600 6z" fill="#2a9d4b" />
          <path d="M12 6.500h10.600A12 12 0 0112 24l5-9z" fill="#fcc934" />
          <path d="M1.600 6L7 15l5 3-1 6A12 12 0 011.600 6z" fill="#2a9d4b" />
          <circle cx="12" cy="12" r="5.600" fill="#fff" />
          <circle cx="12" cy="12" r="4.400" fill="#4087f0" />
        </Svg>
      </div>
      <Svg w={23} h={22} className="ml-[18px]">
        <path d="M11 2.500h10.500v17H11z" fill="#fff" stroke="#2b579a" />
        <path d="M13 6h7M13 9h7M13 12h7M13 15h7" stroke="#2b579a" />
        <path d="M0 2.500L13 0v22L0 19.500z" fill="#2b579a" />
        <path d="M3 7.500l1.700 7 1.800-6 1.800 6L10 7.500" stroke="#fff" strokeWidth="1.400" />
      </Svg>
      <div className="ml-[13px] flex h-full w-[48px] items-center justify-center border-b-2 border-[#1976c9] bg-[#e9eff3]">
        <Svg w={23} h={22} className="mt-[2px]">
          <path d="M11 2.500h10.500v17H11z" fill="#fff" stroke="#217346" />
          <path d="M14 5.500h6M14 8.500h6M14 11.500h6M14 14.500h6M14 17h6" stroke="#217346" strokeWidth="1.700" />
          <path d="M0 2.500L13 0v22L0 19.500z" fill="#1f7145" />
          <path d="M4 7l5.500 8M9.500 7L4 15" stroke="#fff" strokeWidth="1.800" />
        </Svg>
      </div>
      <Svg w={12} h={8} className="ml-[436px]"><path d="M.8 7L6 1.500 11.200 7" stroke="#222" strokeWidth="1.500" /></Svg>
      <Svg w={17} h={13} className="ml-[10px]">
        <path d="M5 3.500h9.500v7.500H4V8" stroke="#111" strokeWidth="1.300" />
        <path d="M6.500 5h6.500v4.500h-6.500zM15 5.500h1.300V9H15z" fill="#111" />
        <path d="M1.500 0v3M4.500 0v3M.5 3h5v1.500a2.500 2.500 0 01-5 0zM3 6.500V10" stroke="#111" strokeWidth="1.100" />
      </Svg>
      <Svg w={14} h={14} className="ml-[10px]">
        <path d="M1 13A12 12 0 0113 1M4 13.500A9 9 0 0113 4.500M7 13.500a6 6 0 016-6" stroke="#333" strokeWidth="1.200" />
        <circle cx="11.500" cy="12" r="1.700" fill="#222" />
      </Svg>
      <Svg w={17} h={13} className="ml-[8px]">
        <path d="M1 4.500h2.500L7 1v11L3.500 8.500H1z" stroke="#111" strokeWidth="1.200" />
        <path d="M9 4.500c1 1 1 3 0 4M11.500 2.500c2 2 2 6 0 8M14 .5c3 3 3 9 0 12" stroke="#222" strokeWidth="1.100" />
      </Svg>
      <T w={6} className="ml-[17px]">ع</T>
      <div className="ml-[20px] flex w-[54px] flex-col items-center leading-[18px]">
        <T w={42}>7:20 PM</T>
        <T w={52}>5/26/2026</T>
      </div>
      <Svg w={17} h={17} className="ml-[17px]">
        <path d="M1 1h15v11.500h-4.500l-3 3v-3H1z" stroke="#111" strokeWidth="1.300" />
      </Svg>
      <i className="ml-[19px] h-full w-px bg-[#aab4be]" />
    </div>
  );
}

export default function App() {
  return (
    <div className="relative h-[768px] w-[1366px] overflow-hidden bg-[#e6e6e6] font-['Open_Sans','DejaVu_Sans',sans-serif] leading-[16px]">
      <header className="bg-[#217346]">
        <TitleBar />
        <TabStrip />
      </header>
      <Ribbon />
      <FormulaBar />
      <Sheet />
      <SheetTabs />
      <StatusBar />
      <TaskBar />
      {/* watermark */}
      <div className="pointer-events-none absolute left-[601px] top-[674px] flex flex-col font-bold text-[#8a8f94] opacity-25">
        <T w={164} className="text-[52px] leading-[54px]">مستقل</T>
        <T w={164} className="mt-[-2px] text-[25px] leading-[26px]">mostaql.com</T>
      </div>
    </div>
  );
}
